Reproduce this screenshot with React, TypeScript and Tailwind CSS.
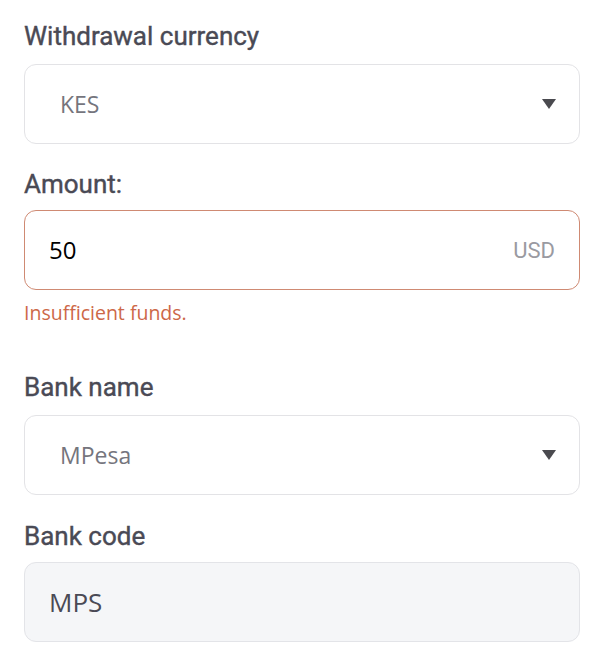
import { useState } from 'react';

function Label({ children }: { children: React.ReactNode }) {
  return (
    <div className="font-['Roboto',sans-serif] text-[26px] leading-[32px] font-normal text-[#4a4a55] [-webkit-text-stroke:0.4px_#4a4a55]">
      {children}
    </div>
  );
}

function SelectBox({ value }: { value: string }) {
  return (
    <div className="flex items-center justify-between h-20 rounded-xl border border-[#e3e3e6] bg-white pl-[35px] pr-[23px]">
      <span className="font-['Open_Sans',sans-serif] text-[23px] text-[#75757d]">{value}</span>
      <svg width="14" height="10" viewBox="0 0 14 10">
        <path d="M0 0 H14 L7 10 Z" fill="#4a4a4f" />
      </svg>
    </div>
  );
}

export default function App() {
  const [amount, setAmount] = useState('50');

  return (
    <div className="w-[602px] h-[664px] bg-white pl-6 pr-[22px] pt-[20px]">
      <Label>Withdrawal currency</Label>
      <div className="mt-[12px]">
        <SelectBox value="KES" />
      </div>

      <div className="mt-6">
        <Label>Amount:</Label>
      </div>
      <div className="mt-[10px] flex items-center h-20 rounded-xl border border-[#cf8a73] bg-white pl-6 pr-6">
        <input
          value={amount}
          onChange={(e) => setAmount(e.target.value)}
          className="flex-1 min-w-0 outline-none bg-transparent font-['Open_Sans',sans-serif] text-[24px] text-black"
        />
        <span className="font-['Roboto',sans-serif] text-[22px] text-[#9a9aa1]">USD</span>
      </div>
      <div className="mt-[10px] font-['Open_Sans',sans-serif] text-[19.5px] leading-[26px] text-[#cd6848]">
        Insufficient funds.
      </div>

      <div className="mt-[45px]">
        <Label>Bank name</Label>
      </div>
      <div className="mt-[12px]">
        <SelectBox value="MPesa" />
      </div>

      <div className="mt-[25px]">
        <Label>Bank code</Label>
      </div>
      <div className="mt-[10px] flex items-center h-20 rounded-xl border border-[#e3e4e8] bg-[#f5f6f8] px-6">
        <span className="font-['Open_Sans',sans-serif] text-[26px] text-[#4a4a55]">MPS</span>
      </div>
    </div>
  );
}
